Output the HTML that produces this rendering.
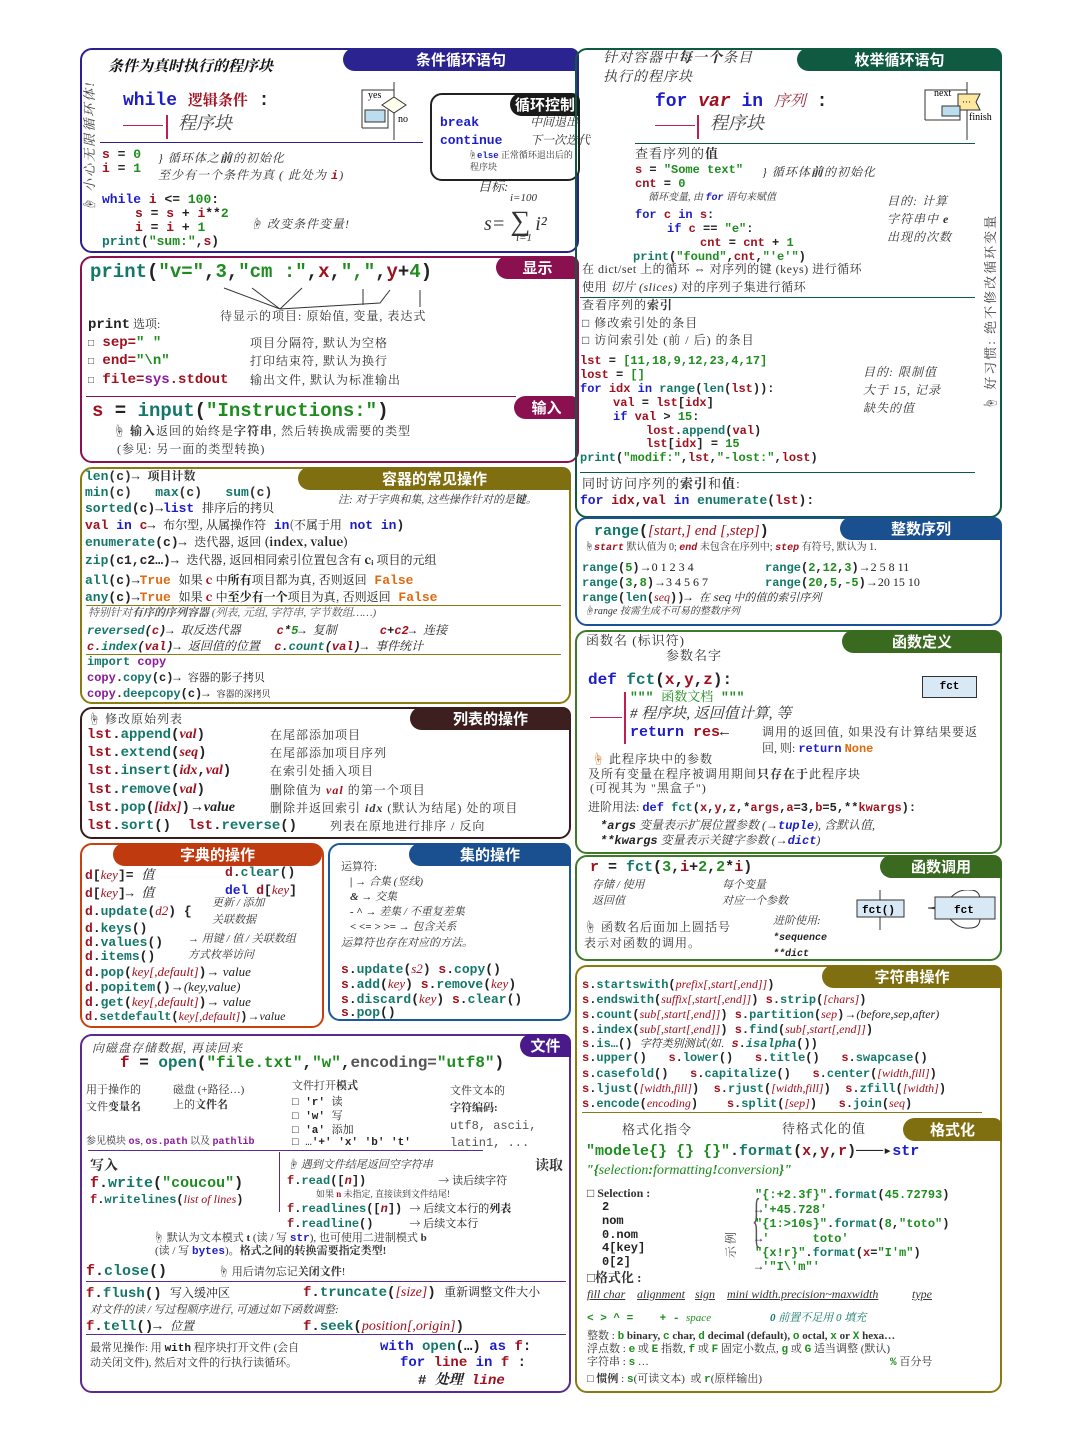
<!DOCTYPE html>
<html><head><meta charset="utf-8">
<style>
body{margin:0;width:1080px;height:1440px;background:#fff;position:relative;overflow:hidden}
.l{position:absolute;white-space:pre;line-height:1;font-family:"Liberation Serif","Noto Serif CJK SC",serif;font-size:12px;color:#333}
.c{font-family:"Liberation Mono","Noto Sans CJK SC",monospace;font-weight:bold;color:#222}
.k{color:#1c1cc8}.f{color:#13776a}.v{color:#a0101e}.g{color:#1e8c1e}.p{color:#8c1a9a}.o{color:#e06a10}
.i{font-style:italic}.bd{font-weight:bold}
.b{position:absolute;border:2px solid;border-radius:12px;box-sizing:border-box}
.t{position:absolute;color:#fff;font:bold 15px "Noto Sans CJK SC",sans-serif;border-radius:14px 10px 0 14px;text-align:center;line-height:23px;height:23px}
.hr{position:absolute;height:2px}
.rt{position:absolute;white-space:nowrap;transform:rotate(-90deg);transform-origin:left top;font-family:"Liberation Serif","Noto Serif CJK SC",serif;font-style:italic;font-size:13px;line-height:15px;color:#444;letter-spacing:2px}
</style></head><body>

<!-- BOX 1 条件循环 -->
<div class="b" style="left:80px;top:48px;width:499px;height:205px;border-color:#2b2090"></div>
<div class="t" style="left:343px;top:48px;width:236px;background:#2b2490">条件循环语句</div>
<div class="l i bd" style="left:108px;top:60px;font-size:15px;color:#111">条件为真时执行的程序块</div>
<div class="l c" style="left:123px;top:92px;font-size:18px"><span class="k">while</span> <span class="v" style="font-family:'Noto Serif CJK SC';font-size:15px">逻辑条件</span> :</div>
<div class="hr" style="left:123px;top:125px;width:40px;height:1px;background:#c02050"></div>
<div style="position:absolute;left:166px;top:115px;width:2px;height:24px;background:#c02050"></div>
<div class="l i" style="left:178px;top:114px;font-size:18px;color:#444">程序块</div>
<div class="hr" style="left:100px;top:142px;width:323px;height:1px;background:#2b2090"></div>
<div class="l c" style="left:102px;top:148px;font-size:13px"><span class="v">s</span> = <span class="g">0</span></div>
<div class="l c" style="left:102px;top:162px;font-size:13px"><span class="v">i</span> = <span class="g">1</span></div>
<div class="l i" style="left:158px;top:152px;font-size:12px;letter-spacing:1px">} 循环体之<b>前</b>的初始化</div>
<div class="l i" style="left:158px;top:169px;font-size:12px;letter-spacing:1px">至少有一个条件为真 ( 此处为 <span class="c v">i</span>)</div>
<div class="l c" style="left:102px;top:193px;font-size:13px"><span class="k">while</span> <span class="v">i</span> &lt;= <span class="g">100</span>:</div>
<div class="l c" style="left:135px;top:207px;font-size:13px"><span class="v">s</span> = <span class="v">s</span> + <span class="v">i</span>**<span class="g">2</span></div>
<div class="l c" style="left:135px;top:221px;font-size:13px"><span class="v">i</span> = <span class="v">i</span> + <span class="g">1</span></div>
<div class="l c" style="left:102px;top:235px;font-size:13px"><span class="f">print</span>(<span class="g">"sum:"</span>,<span class="v">s</span>)</div>
<div class="l i" style="left:250px;top:218px;letter-spacing:1px">☝ 改变条件变量!</div>
<div class="rt" style="left:82px;top:212px">☝ 小心无限循环体!</div>
<svg style="position:absolute;left:360px;top:80px" width="55" height="60"><path d="M34 2V80" stroke="#333" fill="none"/><path d="M34 55V70" stroke="#333"/><polygon points="34,17 46,25 34,33 22,25" fill="#ffe" stroke="#333"/><rect x="5" y="30" width="20" height="12" fill="#bde" stroke="#333"/><path d="M2 48H28V30 M2 48V10H34" stroke="#333" fill="none"/><text x="8" y="18" font-size="10" font-family="Liberation Serif">yes</text><text x="38" y="42" font-size="10" font-family="Liberation Serif">no</text></svg>
<div class="l i" style="left:478px;top:180px;font-size:13px">目标:</div>
<div class="l i" style="left:510px;top:193px;font-size:11px">i=100</div>
<div class="l i" style="left:484px;top:208px;font-size:20px">s= <span style="font-size:28px;font-style:normal">∑</span> i²</div>
<div class="l i" style="left:516px;top:233px;font-size:11px">i=1</div>

<!-- 循环控制 -->
<div class="b" style="left:430px;top:93px;width:150px;height:88px;border-color:#222;background:#fff"></div>
<div class="t" style="left:510px;top:93px;width:70px;background:#1a1a1a">循环控制</div>
<div class="l c k" style="left:440px;top:116px;font-size:13px">break</div>
<div class="l i" style="left:530px;top:116px">中间退出</div>
<div class="l c k" style="left:440px;top:134px;font-size:13px">continue</div>
<div class="l i" style="left:530px;top:134px">下一次迭代</div>
<div class="l" style="left:468px;top:151px;font-size:9px">☝<span class="c k">else</span> 正常循环退出后的</div>
<div class="l" style="left:470px;top:163px;font-size:9px">程序块</div>

<!-- 显示 -->
<div class="b" style="left:80px;top:256px;width:499px;height:207px;border-color:#8a1050"></div>
<div class="t" style="left:496px;top:256px;width:83px;background:#8a1050">显示</div>
<div class="l c" style="left:90px;top:263px;font-size:19px"><span class="f">print</span>(<span class="g">"v="</span>,<span class="g">3</span>,<span class="g">"cm :"</span>,<span class="v">x</span>,<span class="g">","</span>,<span class="v">y</span>+<span class="g">4</span>)</div>
<svg style="position:absolute;left:180px;top:285px" width="260" height="30"><g stroke="#333" fill="none"><path d="M100 24L44 3M100 24L72 3M100 24L122 3M100 24L200 18L210 5M183 20V4M240 22V5"/></g></svg>
<div class="l" style="left:220px;top:310px;font-size:12px;letter-spacing:1px">待显示的项目: 原始值, 变量, 表达式</div>
<div class="l" style="left:88px;top:318px;font-size:12px"><span class="c" style="font-size:14px">print</span> 选项:</div>
<div class="l c v" style="left:88px;top:336px;font-size:14px"><span style="color:#333;font-size:10px">□</span> sep=<span class="g">" "</span></div>
<div class="l c v" style="left:88px;top:354px;font-size:14px"><span style="color:#333;font-size:10px">□</span> end=<span class="g">"\n"</span></div>
<div class="l c v" style="left:88px;top:373px;font-size:14px"><span style="color:#333;font-size:10px">□</span> file=<span class="p">sys</span>.stdout</div>
<div class="l" style="left:250px;top:337px;letter-spacing:1px">项目分隔符, 默认为空格</div>
<div class="l" style="left:250px;top:355px;letter-spacing:1px">打印结束符, 默认为换行</div>
<div class="l" style="left:250px;top:374px;letter-spacing:1px">输出文件, 默认为标准输出</div>
<div class="hr" style="left:86px;top:396px;width:430px;height:1px;background:#8a1050"></div>
<div class="t" style="left:514px;top:396px;width:65px;background:#8a1050">输入</div>
<div class="l c" style="left:92px;top:402px;font-size:19px"><span class="v">s</span> = <span class="f">input</span>(<span class="g">"Instructions:"</span>)</div>
<div class="l" style="left:113px;top:425px;letter-spacing:1px">☝ <b>输入</b>返回的始终是<b>字符串</b>, 然后转换成需要的类型</div>
<div class="l" style="left:117px;top:443px;letter-spacing:1px">(参见: 另一面的类型转换)</div>

<!-- 容器 -->
<div class="b" style="left:80px;top:467px;width:491px;height:237px;border-color:#8a7a10"></div>
<div class="t" style="left:298px;top:467px;width:273px;background:#7f6f10">容器的常见操作</div>
<div class="l c f" style="left:85px;top:470px;font-size:13px">len<span style="color:#333">(c)→</span> <span class="l" style="position:static;font-size:12px">项目计数</span></div>
<div class="l c f" style="left:85px;top:486px;font-size:13px">min<span style="color:#333">(c)</span>   max<span style="color:#333">(c)</span>   sum<span style="color:#333">(c)</span></div>
<div class="l i" style="left:338px;top:495px;font-size:11px">注: 对于字典和集, 这些操作针对的是<b>键</b>。</div>
<div class="l c" style="left:85px;top:502px;font-size:13px"><span class="f">sorted</span>(c)→<span class="k">list</span> <span style="font-family:'Noto Serif CJK SC';font-weight:normal;font-size:12px">排序后的拷贝</span></div>
<div class="l c" style="left:85px;top:519px;font-size:13px"><span class="v">val</span> <span class="k">in</span> <span class="v">c</span>→ <span style="font-family:'Noto Serif CJK SC';font-weight:normal;font-size:12px">布尔型, 从属操作符</span> <span class="k">in</span><span style="font-family:'Noto Serif CJK SC';font-weight:normal;font-size:12px">(不属于用</span> <span class="k">not in</span>)</div>
<div class="l c" style="left:85px;top:536px;font-size:13px"><span class="f">enumerate</span>(c)→ <span style="font-family:'Noto Serif CJK SC';font-weight:normal;font-size:12px">迭代器, 返回 <b>(index, value)</b></span></div>
<div class="l c" style="left:85px;top:554px;font-size:13px"><span class="f">zip</span>(c1,c2…)→ <span style="font-family:'Noto Serif CJK SC';font-weight:normal;font-size:12px">迭代器, 返回相同索引位置包含有 <b>cᵢ</b> 项目的元组</span></div>
<div class="l c" style="left:85px;top:574px;font-size:13px"><span class="f">all</span>(c)→<span class="o">True</span> <span style="font-family:'Noto Serif CJK SC';font-weight:normal;font-size:12px">如果 <b class="v">c</b> 中<b>所有</b>项目都为真, 否则返回</span> <span class="o">False</span></div>
<div class="l c" style="left:85px;top:591px;font-size:13px"><span class="f">any</span>(c)→<span class="o">True</span> <span style="font-family:'Noto Serif CJK SC';font-weight:normal;font-size:12px">如果 <b class="v">c</b> 中<b>至少有一个</b>项目为真, 否则返回</span> <span class="o">False</span></div>
<div class="hr" style="left:86px;top:605px;width:475px;height:1px;background:#8a7a10"></div>
<div class="l i" style="left:88px;top:608px;font-size:11px;color:#555">特别针对<b>有序的序列容器</b> (列表, 元组, 字符串, 字节数组……)</div>
<div class="l c i" style="left:87px;top:624px;font-size:12px"><span class="f">reversed</span>(<span class="v">c</span>)→ <span style="font-family:'Noto Serif CJK SC';font-weight:normal">取反迭代器</span>     <span class="v">c</span>*<span class="g">5</span>→ <span style="font-family:'Noto Serif CJK SC';font-weight:normal">复制</span>      <span class="v">c</span>+<span class="v">c2</span>→ <span style="font-family:'Noto Serif CJK SC';font-weight:normal">连接</span></div>
<div class="l c i" style="left:87px;top:640px;font-size:12px"><span class="v">c</span>.<span class="f">index</span>(<span class="v">val</span>)→ <span style="font-family:'Noto Serif CJK SC';font-weight:normal">返回值的位置</span>  <span class="v">c</span>.<span class="f">count</span>(<span class="v">val</span>)→ <span style="font-family:'Noto Serif CJK SC';font-weight:normal">事件统计</span></div>
<div class="hr" style="left:86px;top:654px;width:475px;height:1px;background:#8a7a10"></div>
<div class="l c" style="left:87px;top:656px;font-size:12px"><span class="f">import</span> <span class="p">copy</span></div>
<div class="l c" style="left:87px;top:672px;font-size:12px"><span class="p">copy</span>.<span class="f">copy</span>(c)→ <span style="font-family:'Noto Serif CJK SC';font-weight:normal;font-size:11px">容器的影子拷贝</span></div>
<div class="l c" style="left:87px;top:688px;font-size:12px"><span class="p">copy</span>.<span class="f">deepcopy</span>(c)→ <span style="font-family:'Noto Serif CJK SC';font-weight:normal;font-size:9px">容器的深拷贝</span></div>

<!-- 列表 -->
<div class="b" style="left:80px;top:707px;width:491px;height:132px;border-color:#3a1a1a"></div>
<div class="t" style="left:410px;top:707px;width:161px;background:#3d1f1f">列表的操作</div>
<div class="l" style="left:88px;top:713px;letter-spacing:1px">☝ 修改原始列表</div>
<div class="l c" style="left:87px;top:728px;font-size:14px"><span class="v">lst</span>.<span class="f">append</span>(<span class="v i" style="font-family:'Liberation Serif'">val</span>)</div>
<div class="l c" style="left:87px;top:746px;font-size:14px"><span class="v">lst</span>.<span class="f">extend</span>(<span class="v i" style="font-family:'Liberation Serif'">seq</span>)</div>
<div class="l c" style="left:87px;top:764px;font-size:14px"><span class="v">lst</span>.<span class="f">insert</span>(<span class="v i" style="font-family:'Liberation Serif'">idx</span>,<span class="v i" style="font-family:'Liberation Serif'">val</span>)</div>
<div class="l c" style="left:87px;top:783px;font-size:14px"><span class="v">lst</span>.<span class="f">remove</span>(<span class="v i" style="font-family:'Liberation Serif'">val</span>)</div>
<div class="l c" style="left:87px;top:801px;font-size:14px"><span class="v">lst</span>.<span class="f">pop</span>(<span class="v i" style="font-family:'Liberation Serif'">[idx]</span>)<span class="i" style="font-family:'Liberation Serif'">→value</span></div>
<div class="l c" style="left:87px;top:819px;font-size:14px"><span class="v">lst</span>.<span class="f">sort</span>()  <span class="v">lst</span>.<span class="f">reverse</span>()</div>
<div class="l" style="left:270px;top:729px;letter-spacing:1px">在尾部添加项目</div>
<div class="l" style="left:270px;top:747px;letter-spacing:1px">在尾部添加项目序列</div>
<div class="l" style="left:270px;top:765px;letter-spacing:1px">在索引处插入项目</div>
<div class="l" style="left:270px;top:784px;letter-spacing:1px">删除值为 <b class="i v">val</b> 的第一个项目</div>
<div class="l" style="left:270px;top:802px;letter-spacing:1px">删除并返回索引 <b class="i">idx</b> (默认为结尾) 处的项目</div>
<div class="l" style="left:330px;top:820px;letter-spacing:1px">列表在原地进行排序 / 反向</div>

<!-- 字典 -->
<div class="b" style="left:80px;top:843px;width:244px;height:185px;border-color:#c84010"></div>
<div class="t" style="left:113px;top:843px;width:209px;background:#c03a10;border-radius:14px 14px 14px 14px">字典的操作</div>
<div class="l c" style="left:85px;top:867px;font-size:13px"><span class="v">d</span>[<span class="v i" style="font-family:'Liberation Serif';font-weight:normal">key</span>]= <span class="i" style="font-family:'Noto Serif CJK SC';font-weight:normal">值</span></div>
<div class="l c" style="left:85px;top:885px;font-size:13px"><span class="v">d</span>[<span class="v i" style="font-family:'Liberation Serif';font-weight:normal">key</span>]→ <span class="i" style="font-family:'Noto Serif CJK SC';font-weight:normal">值</span></div>
<div class="l c" style="left:225px;top:866px;font-size:13px"><span class="v">d</span>.<span class="f">clear</span>()</div>
<div class="l c" style="left:225px;top:883px;font-size:13px"><span class="k">del</span> <span class="v">d</span>[<span class="v i" style="font-family:'Liberation Serif';font-weight:normal">key</span>]</div>
<div class="l c" style="left:85px;top:904px;font-size:13px"><span class="v">d</span>.<span class="f">update</span>(<span class="v i" style="font-family:'Liberation Serif';font-weight:normal">d2</span>) {</div>
<div class="l i" style="left:212px;top:898px;font-size:11px">更新 / 添加</div>
<div class="l i" style="left:212px;top:915px;font-size:11px">关联数据</div>
<div class="l c" style="left:85px;top:922px;font-size:13px"><span class="v">d</span>.<span class="f">keys</span>()</div>
<div class="l c" style="left:85px;top:936px;font-size:13px"><span class="v">d</span>.<span class="f">values</span>()</div>
<div class="l c" style="left:85px;top:950px;font-size:13px"><span class="v">d</span>.<span class="f">items</span>()</div>
<div class="l i" style="left:188px;top:934px;font-size:11px">→ 用键 / 值 / 关联数组</div>
<div class="l i" style="left:188px;top:950px;font-size:11px">方式枚举访问</div>
<div class="l c" style="left:85px;top:965px;font-size:13px"><span class="v">d</span>.<span class="f">pop</span>(<span class="v i" style="font-family:'Liberation Serif';font-weight:normal">key[,default]</span>)<span class="i" style="font-family:'Liberation Serif';font-weight:normal">→ value</span></div>
<div class="l c" style="left:85px;top:980px;font-size:13px"><span class="v">d</span>.<span class="f">popitem</span>()<span class="i" style="font-family:'Liberation Serif';font-weight:normal">→(key,value)</span></div>
<div class="l c" style="left:85px;top:995px;font-size:13px"><span class="v">d</span>.<span class="f">get</span>(<span class="v i" style="font-family:'Liberation Serif';font-weight:normal">key[,default]</span>)<span class="i" style="font-family:'Liberation Serif';font-weight:normal">→ value</span></div>
<div class="l c" style="left:85px;top:1010px;font-size:12px"><span class="v">d</span>.<span class="f">setdefault</span>(<span class="v i" style="font-family:'Liberation Serif';font-weight:normal">key[,default]</span>)<span class="i" style="font-family:'Liberation Serif';font-weight:normal">→value</span></div>

<!-- 集 -->
<div class="b" style="left:328px;top:843px;width:243px;height:178px;border-color:#1a5a9a"></div>
<div class="t" style="left:409px;top:843px;width:162px;background:#1a4f90">集的操作</div>
<div class="l" style="left:341px;top:862px;font-size:11px">运算符:</div>
<div class="l i" style="left:350px;top:877px;font-size:11px"><b>|</b> → 合集 (竖线)</div>
<div class="l i" style="left:350px;top:892px;font-size:11px"><b>&amp;</b> → 交集</div>
<div class="l i" style="left:350px;top:907px;font-size:11px"><b>- ^</b> → 差集 / 不重复差集</div>
<div class="l i" style="left:350px;top:922px;font-size:11px"><b>&lt; &lt;= &gt; &gt;=</b> → 包含关系</div>
<div class="l i" style="left:341px;top:938px;font-size:11px">运算符也存在对应的方法。</div>
<div class="l c" style="left:341px;top:962px;font-size:13px"><span class="v">s</span>.<span class="f">update</span>(<span class="v i" style="font-family:'Liberation Serif';font-weight:normal">s2</span>) <span class="v">s</span>.<span class="f">copy</span>()</div>
<div class="l c" style="left:341px;top:977px;font-size:13px"><span class="v">s</span>.<span class="f">add</span>(<span class="v i" style="font-family:'Liberation Serif';font-weight:normal">key</span>) <span class="v">s</span>.<span class="f">remove</span>(<span class="v i" style="font-family:'Liberation Serif';font-weight:normal">key</span>)</div>
<div class="l c" style="left:341px;top:992px;font-size:13px"><span class="v">s</span>.<span class="f">discard</span>(<span class="v i" style="font-family:'Liberation Serif';font-weight:normal">key</span>) <span class="v">s</span>.<span class="f">clear</span>()</div>
<div class="l c" style="left:341px;top:1006px;font-size:13px"><span class="v">s</span>.<span class="f">pop</span>()</div>

<!-- 文件 -->
<div class="b" style="left:80px;top:1034px;width:491px;height:359px;border-color:#5a2a90"></div>
<div class="t" style="left:520px;top:1034px;width:51px;background:#4a1a8a">文件</div>
<div class="l i" style="left:92px;top:1042px;font-size:12px;letter-spacing:1px">向磁盘存储数据, 再读回来</div>
<div class="l c" style="left:120px;top:1055px;font-size:16px"><span class="v">f</span> = <span class="f">open</span>(<span class="g">"file.txt"</span>,<span class="g">"w"</span>,<span style="color:#555">encoding=</span><span class="g">"utf8"</span>)</div>
<div class="l" style="left:86px;top:1085px;font-size:11px">用于操作的</div>
<div class="l" style="left:86px;top:1102px;font-size:11px">文件<b>变量名</b></div>
<div class="l" style="left:173px;top:1085px;font-size:11px">磁盘 (+路径…)</div>
<div class="l" style="left:173px;top:1100px;font-size:11px">上的<b>文件名</b></div>
<div class="l" style="left:292px;top:1081px;font-size:11px">文件打开<b>模式</b></div>
<div class="l c" style="left:292px;top:1096px;font-size:11px"><span style="font-weight:normal">□</span> 'r' <span style="font-family:'Noto Serif CJK SC';font-weight:normal">读</span></div>
<div class="l c" style="left:292px;top:1110px;font-size:11px"><span style="font-weight:normal">□</span> 'w' <span style="font-family:'Noto Serif CJK SC';font-weight:normal">写</span></div>
<div class="l c" style="left:292px;top:1124px;font-size:11px"><span style="font-weight:normal">□</span> 'a' <span style="font-family:'Noto Serif CJK SC';font-weight:normal">添加</span></div>
<div class="l c" style="left:292px;top:1138px;font-size:11px"><span style="font-weight:normal">□ …</span>'+' 'x' 'b' 't'</div>
<div class="l" style="left:450px;top:1086px;font-size:11px">文件文本的</div>
<div class="l bd" style="left:450px;top:1103px;font-size:11px">字符编码:</div>
<div class="l c" style="left:450px;top:1120px;font-size:12px;font-weight:normal;color:#555">utf8, ascii,</div>
<div class="l c" style="left:450px;top:1137px;font-size:12px;font-weight:normal;color:#555">latin1, ...</div>
<div class="l" style="left:86px;top:1137px;font-size:10px">参见模块 <span class="c p">os</span>, <span class="c p">os.path</span> 以及 <span class="c p">pathlib</span></div>
<div class="hr" style="left:88px;top:1150px;width:395px;height:1px;background:#5a2a90"></div>
<div style="position:absolute;left:279px;top:1152px;width:1px;height:60px;background:#5a2a90"></div>
<div class="l bd" style="left:90px;top:1160px;font-size:14px">写入</div>
<div class="l c" style="left:90px;top:1176px;font-size:15px"><span class="v">f</span>.<span class="f">write</span>(<span class="g">"coucou"</span>)</div>
<div class="l c" style="left:90px;top:1193px;font-size:12px"><span class="v">f</span>.<span class="f">writelines</span>(<span class="v i" style="font-family:'Liberation Serif';font-weight:normal">list of lines</span>)</div>
<div class="l bd" style="left:535px;top:1160px;font-size:14px">读取</div>
<div class="l i" style="left:287px;top:1160px;font-size:11px">☝ 遇到文件结尾返回空字符串</div>
<div class="l c" style="left:287px;top:1175px;font-size:12px"><span class="v">f</span>.<span class="f">read</span>([<span class="v i">n</span>])          <span style="font-family:'Noto Serif CJK SC';font-weight:normal;font-size:11px">→ 读后续字符</span></div>
<div class="l" style="left:316px;top:1190px;font-size:9px">如果 <b class="v">n</b> 未指定, 直接读到文件结尾!</div>
<div class="l c" style="left:287px;top:1203px;font-size:12px"><span class="v">f</span>.<span class="f">readlines</span>([<span class="v i">n</span>]) <span style="font-family:'Noto Serif CJK SC';font-weight:normal;font-size:11px">→ 后续文本行的<b>列表</b></span></div>
<div class="l c" style="left:287px;top:1218px;font-size:12px"><span class="v">f</span>.<span class="f">readline</span>()     <span style="font-family:'Noto Serif CJK SC';font-weight:normal;font-size:11px">→ 后续文本行</span></div>
<div class="l" style="left:153px;top:1233px;font-size:11px">☝ 默认为文本模式 <b>t</b> (读 / 写 <span class="c k">str</span>), 也可使用二进制模式 <b>b</b></div>
<div class="l" style="left:155px;top:1246px;font-size:11px">(读 / 写 <span class="c k">bytes</span>)。<b>格式之间的转换需要指定类型!</b></div>
<div class="l c" style="left:86px;top:1264px;font-size:15px"><span class="v">f</span>.<span class="f">close</span>()</div>
<div class="l" style="left:218px;top:1267px;font-size:11px">☝ 用后请勿忘记<b>关闭文件</b>!</div>
<div class="hr" style="left:86px;top:1281px;width:480px;height:1px;background:#5a2a90"></div>
<div class="l c" style="left:86px;top:1287px;font-size:14px"><span class="v">f</span>.<span class="f">flush</span>() <span style="font-family:'Noto Serif CJK SC';font-weight:normal;font-size:12px">写入缓冲区</span></div>
<div class="l c" style="left:303px;top:1286px;font-size:14px"><span class="v">f</span>.<span class="f">truncate</span>(<span class="v i" style="font-family:'Liberation Serif';font-weight:normal">[size]</span>) <span style="font-family:'Noto Serif CJK SC';font-weight:normal;font-size:12px">重新调整文件大小</span></div>
<div class="l i" style="left:90px;top:1305px;font-size:11px">对文件的读 / 写过程顺序进行, 可通过如下函数调整:</div>
<div class="l c" style="left:86px;top:1320px;font-size:14px"><span class="v">f</span>.<span class="f">tell</span>()→ <span class="i" style="font-family:'Noto Serif CJK SC';font-weight:normal;font-size:12px">位置</span></div>
<div class="l c" style="left:303px;top:1320px;font-size:14px"><span class="v">f</span>.<span class="f">seek</span>(<span class="v i" style="font-family:'Liberation Serif';font-weight:normal">position[,origin]</span>)</div>
<div class="hr" style="left:86px;top:1334px;width:480px;height:1px;background:#5a2a90"></div>
<div class="l" style="left:90px;top:1343px;font-size:11px">最常见操作: 用 <b class="c">with</b> 程序块打开文件 (会自</div>
<div class="l" style="left:90px;top:1358px;font-size:11px">动关闭文件), 然后对文件的行执行读循环。</div>
<div class="l c" style="left:380px;top:1340px;font-size:14px"><span class="k">with</span> <span class="f">open</span>(…) <span class="k">as</span> <span class="v">f</span>:</div>
<div class="l c" style="left:400px;top:1356px;font-size:14px"><span class="k">for</span> <span class="v">line</span> <span class="k">in</span> <span class="v">f</span> :</div>
<div class="l c" style="left:418px;top:1372px;font-size:14px"># <span class="i" style="font-family:'Noto Serif CJK SC'">处理</span> <span class="v i">line</span></div>

<!-- 枚举 -->
<div class="b" style="left:575px;top:48px;width:427px;height:470px;border-color:#0f5a3e"></div>
<div class="t" style="left:797px;top:48px;width:205px;background:#0f5a40">枚举循环语句</div>
<div class="l i" style="left:603px;top:52px;font-size:14px;letter-spacing:1px">针对容器中<b>每一个</b>条目</div>
<div class="l i" style="left:603px;top:71px;font-size:14px;letter-spacing:1px">执行的程序块</div>
<div class="l c" style="left:655px;top:92px;font-size:18px"><span class="k">for</span> <span class="v i">var</span> <span class="k">in</span> <span class="i" style="font-family:'Noto Serif CJK SC';font-weight:normal;color:#a03040;font-size:16px">序列</span> :</div>
<div class="hr" style="left:655px;top:125px;width:40px;height:1px;background:#c02050"></div>
<div style="position:absolute;left:697px;top:115px;width:2px;height:24px;background:#c02050"></div>
<div class="l i" style="left:710px;top:114px;font-size:18px;color:#444">程序块</div>
<svg style="position:absolute;left:920px;top:80px" width="80" height="60"><g stroke="#333" fill="none"><path d="M47 2V80M5 40V10H47M5 40H40V24"/></g><path d="M38 14H60L56 22L60 30H38Z" fill="#ffe7a0" stroke="#333"/><text x="42" y="25" font-size="9">···</text><rect x="22" y="26" width="18" height="10" fill="#bde" stroke="#333"/><text x="14" y="16" font-size="10" font-family="Liberation Serif">next</text><text x="49" y="40" font-size="10" font-family="Liberation Serif">finish</text></svg>
<div class="hr" style="left:635px;top:143px;width:340px;height:1px;background:#0f5a3e"></div>
<div class="l" style="left:635px;top:147px;font-size:13px;letter-spacing:1px">查看序列的<b>值</b></div>
<div class="l c" style="left:635px;top:164px;font-size:12px"><span class="v">s</span> = <span class="g">"Some text"</span></div>
<div class="l c" style="left:635px;top:178px;font-size:12px"><span class="v">cnt</span> = <span class="g">0</span></div>
<div class="l i" style="left:762px;top:166px;font-size:12px;letter-spacing:1px">} 循环体<b>前</b>的初始化</div>
<div class="l i" style="left:648px;top:193px;font-size:10px">循环变量, 由 <span class="c k">for</span> 语句来赋值</div>
<div class="l c" style="left:635px;top:209px;font-size:12px"><span class="k">for</span> <span class="v">c</span> <span class="k">in</span> <span class="v">s</span>:</div>
<div class="l c" style="left:667px;top:223px;font-size:12px"><span class="k">if</span> <span class="v">c</span> == <span class="g">"e"</span>:</div>
<div class="l c" style="left:700px;top:237px;font-size:12px"><span class="v">cnt</span> = <span class="v">cnt</span> + <span class="g">1</span></div>
<div class="l c" style="left:633px;top:251px;font-size:12px"><span class="f">print</span>(<span class="g">"found"</span>,<span class="v">cnt</span>,<span class="g">"'e'"</span>)</div>
<div class="l i" style="left:887px;top:195px;font-size:12px;letter-spacing:1px">目的: 计算</div>
<div class="l i" style="left:887px;top:213px;font-size:12px;letter-spacing:1px">字符串中 <b>e</b></div>
<div class="l i" style="left:887px;top:231px;font-size:12px;letter-spacing:1px">出现的次数</div>
<div class="l" style="left:582px;top:263px;letter-spacing:0.5px">在 dict/set 上的循环 ⇔ 对序列的键 (keys) 进行循环</div>
<div class="l" style="left:582px;top:281px;letter-spacing:0.5px">使用 <i>切片 (slices)</i> 对的序列子集进行循环</div>
<div class="hr" style="left:580px;top:297px;width:395px;height:1px;background:#0f5a3e"></div>
<div class="l" style="left:582px;top:299px;letter-spacing:1px">查看序列的<b>索引</b></div>
<div class="l" style="left:582px;top:317px;letter-spacing:1px">□ 修改索引处的条目</div>
<div class="l" style="left:582px;top:334px;letter-spacing:1px">□ 访问索引处 (前 / 后) 的条目</div>
<div class="l c" style="left:580px;top:355px;font-size:12px"><span class="v">lst</span> = <span class="g">[11,18,9,12,23,4,17]</span></div>
<div class="l c" style="left:580px;top:369px;font-size:12px"><span class="v">lost</span> = <span class="g">[]</span></div>
<div class="l c" style="left:580px;top:383px;font-size:12px"><span class="k">for</span> <span class="v">idx</span> <span class="k">in</span> <span class="f">range</span>(<span class="f">len</span>(<span class="v">lst</span>)):</div>
<div class="l c" style="left:613px;top:397px;font-size:12px"><span class="v">val</span> = <span class="v">lst</span>[<span class="v">idx</span>]</div>
<div class="l c" style="left:613px;top:411px;font-size:12px"><span class="k">if</span> <span class="v">val</span> &gt; <span class="g">15</span>:</div>
<div class="l c" style="left:646px;top:425px;font-size:12px"><span class="v">lost</span>.<span class="f">append</span>(<span class="v">val</span>)</div>
<div class="l c" style="left:646px;top:438px;font-size:12px"><span class="v">lst</span>[<span class="v">idx</span>] = <span class="g">15</span></div>
<div class="l c" style="left:580px;top:452px;font-size:12px"><span class="f">print</span>(<span class="g">"modif:"</span>,<span class="v">lst</span>,<span class="g">"-lost:"</span>,<span class="v">lost</span>)</div>
<div class="l i" style="left:863px;top:366px;font-size:12px;letter-spacing:1px">目的: 限制值</div>
<div class="l i" style="left:863px;top:384px;font-size:12px;letter-spacing:1px">大于 15, 记录</div>
<div class="l i" style="left:863px;top:402px;font-size:12px;letter-spacing:1px">缺失的值</div>
<div class="rt" style="left:983px;top:410px;font-style:normal">☝ 好习惯: 绝不修改循环变量</div>
<div class="hr" style="left:580px;top:472px;width:395px;height:1px;background:#0f5a3e"></div>
<div class="l" style="left:582px;top:477px;font-size:13px;letter-spacing:1px">同时访问序列的<b>索引</b>和<b>值</b>:</div>
<div class="l c" style="left:580px;top:494px;font-size:13px"><span class="k">for</span> <span class="v">idx</span>,<span class="v">val</span> <span class="k">in</span> <span class="f">enumerate</span>(<span class="v">lst</span>):</div>

<!-- 整数序列 -->
<div class="b" style="left:575px;top:517px;width:427px;height:109px;border-color:#1a4f9a"></div>
<div class="t" style="left:840px;top:517px;width:162px;background:#1a4f90">整数序列</div>
<div class="l c" style="left:594px;top:524px;font-size:15px"><span class="f">range</span>(<span class="v i" style="font-family:'Liberation Serif';font-weight:normal">[start,] end [,step]</span>)</div>
<div class="l" style="left:584px;top:543px;font-size:10px">☝<span class="c v i">start</span> 默认值为 0; <span class="c v i">end</span> 未包含在序列中; <span class="c v i">step</span> 有符号, 默认为 1.</div>
<div class="l c" style="left:582px;top:561px;font-size:12px"><span class="f">range</span>(<span class="g">5</span>)<span style="font-family:'Liberation Serif';font-weight:normal">→0 1 2 3 4</span></div>
<div class="l c" style="left:582px;top:576px;font-size:12px"><span class="f">range</span>(<span class="g">3</span>,<span class="g">8</span>)<span style="font-family:'Liberation Serif';font-weight:normal">→3 4 5 6 7</span></div>
<div class="l c" style="left:582px;top:591px;font-size:12px"><span class="f">range</span>(<span class="f">len</span>(<span class="v i" style="font-family:'Liberation Serif';font-weight:normal">seq</span>))→ <span class="i" style="font-family:'Noto Serif CJK SC';font-weight:normal;font-size:11px">在 seq 中的值的索引序列</span></div>
<div class="l c" style="left:765px;top:561px;font-size:12px"><span class="f">range</span>(<span class="g">2</span>,<span class="g">12</span>,<span class="g">3</span>)<span style="font-family:'Liberation Serif';font-weight:normal">→2 5 8 11</span></div>
<div class="l c" style="left:765px;top:576px;font-size:12px"><span class="f">range</span>(<span class="g">20</span>,<span class="g">5</span>,<span class="g">-5</span>)<span style="font-family:'Liberation Serif';font-weight:normal">→20 15 10</span></div>
<div class="l i" style="left:584px;top:607px;font-size:10px">☝range 按需生成不可易的整数序列</div>

<!-- 函数定义 -->
<div class="b" style="left:575px;top:630px;width:427px;height:224px;border-color:#3f7a2a"></div>
<div class="t" style="left:842px;top:630px;width:160px;background:#3a6a20">函数定义</div>
<div class="l" style="left:586px;top:634px;font-size:13px;letter-spacing:1px">函数名 (标识符)</div>
<div class="l" style="left:666px;top:649px;font-size:13px;letter-spacing:1px">参数名字</div>
<div class="l c" style="left:588px;top:672px;font-size:16px"><span class="k">def</span> <span class="f">fct</span>(<span class="v">x</span>,<span class="v">y</span>,<span class="v">z</span>):</div>
<div class="l c g" style="left:630px;top:689px;font-size:13px">""" <span style="font-family:'Noto Serif CJK SC';font-weight:normal">函数文档</span> """</div>
<div class="l i" style="left:630px;top:707px;font-size:15px"># 程序块, 返回值计算, 等</div>
<div class="l c" style="left:630px;top:725px;font-size:15px"><span class="k">return</span> <span class="v">res</span>←</div>
<div style="position:absolute;left:624px;top:692px;width:2px;height:52px;background:#c02050"></div>
<div class="hr" style="left:590px;top:717px;width:32px;height:1px;background:#c02050"></div>
<div class="l" style="left:762px;top:726px;font-size:12px;letter-spacing:1px">调用的返回值, 如果没有计算结果要返</div>
<div class="l" style="left:762px;top:742px;font-size:12px">回, 则: <span class="c k">return</span> <span class="c o">None</span></div>
<div style="position:absolute;left:922px;top:676px;width:55px;height:22px;border:1.5px solid #333;background:#d8e8f4;box-sizing:border-box;font:bold 11px 'Liberation Mono';text-align:center;line-height:20px">fct</div>
<div class="l" style="left:592px;top:753px;font-size:12px;letter-spacing:1px"><span style="color:#d06010">☝</span> 此程序块中的参数</div>
<div class="l" style="left:588px;top:768px;font-size:12px;letter-spacing:1px">及所有变量在程序被调用期间<b>只存在于</b>此程序块</div>
<div class="l" style="left:590px;top:782px;font-size:12px;letter-spacing:1px">(可视其为 "黑盒子")</div>
<div class="l" style="left:588px;top:801px;font-size:12px">进阶用法: <span class="c" style="font-size:12px"><span class="k">def</span> <span class="f">fct</span>(<span class="v">x</span>,<span class="v">y</span>,<span class="v">z</span>,*<span class="v">args</span>,<span class="v">a</span>=3,<span class="v">b</span>=5,**<span class="v">kwargs</span>):</span></div>
<div class="l i" style="left:600px;top:819px;font-size:12px"><span class="c">*args</span> 变量表示扩展位置参数 (→<span class="c k">tuple</span>), 含默认值,</div>
<div class="l i" style="left:600px;top:834px;font-size:12px"><span class="c">**kwargs</span> 变量表示关键字参数 (→<span class="c k">dict</span>)</div>

<!-- 函数调用 -->
<div class="b" style="left:575px;top:855px;width:427px;height:106px;border-color:#3f7a2a"></div>
<div class="t" style="left:880px;top:855px;width:122px;background:#3a6a20">函数调用</div>
<div class="l c" style="left:590px;top:860px;font-size:15px"><span class="v">r</span> = <span class="f">fct</span>(<span class="g">3</span>,<span class="v">i</span>+<span class="g">2</span>,<span class="g">2</span>*<span class="v">i</span>)</div>
<div class="l i" style="left:592px;top:880px;font-size:11px">存储 / 使用</div>
<div class="l i" style="left:592px;top:896px;font-size:11px">返回值</div>
<div class="l i" style="left:722px;top:880px;font-size:11px">每个变量</div>
<div class="l i" style="left:722px;top:896px;font-size:11px">对应一个参数</div>
<div class="l" style="left:584px;top:921px;font-size:12px;letter-spacing:1px">☝ 函数名后面加上圆括号</div>
<div class="l" style="left:584px;top:937px;font-size:12px;letter-spacing:1px">表示对函数的调用。</div>
<div class="l i" style="left:773px;top:916px;font-size:11px">进阶使用:</div>
<div class="l c i" style="left:773px;top:934px;font-size:10px">*sequence</div>
<div class="l c i" style="left:773px;top:950px;font-size:10px">**dict</div>
<svg style="position:absolute;left:850px;top:890px" width="150" height="50"><g stroke="#333" fill="none"><path d="M30 0V10M30 26V40M78 18C100 18 100 -2 120 0C130 0 130 8 130 10M78 18C100 18 100 40 120 38C130 38 130 30 130 28"/></g><rect x="7" y="10" width="47" height="17" fill="#d8e8f4" stroke="#333"/><text x="12" y="23" font-size="11" font-weight="bold" font-family="Liberation Mono">fct()</text><rect x="85" y="7" width="60" height="22" fill="#d8e8f4" stroke="#333"/><text x="104" y="23" font-size="11" font-weight="bold" font-family="Liberation Mono">fct</text></svg>

<!-- 字符串 -->
<div class="b" style="left:575px;top:965px;width:427px;height:428px;border-color:#8a7a10"></div>
<div class="t" style="left:822px;top:965px;width:180px;background:#7f6f10">字符串操作</div>
<div class="l c" style="left:582px;top:978px;font-size:12px"><span class="v">s</span>.<span class="f">startswith</span>(<span class="v i" style="font-family:'Liberation Serif';font-weight:normal">prefix[,start[,end]]</span>)</div>
<div class="l c" style="left:582px;top:993px;font-size:12px"><span class="v">s</span>.<span class="f">endswith</span>(<span class="v i" style="font-family:'Liberation Serif';font-weight:normal">suffix[,start[,end]]</span>) <span class="v">s</span>.<span class="f">strip</span>(<span class="v i" style="font-family:'Liberation Serif';font-weight:normal">[chars]</span>)</div>
<div class="l c" style="left:582px;top:1008px;font-size:12px"><span class="v">s</span>.<span class="f">count</span>(<span class="v i" style="font-family:'Liberation Serif';font-weight:normal">sub[,start[,end]]</span>) <span class="v">s</span>.<span class="f">partition</span>(<span class="v i" style="font-family:'Liberation Serif';font-weight:normal">sep</span>)<span class="i" style="font-family:'Liberation Serif';font-weight:normal">→(before,sep,after)</span></div>
<div class="l c" style="left:582px;top:1023px;font-size:12px"><span class="v">s</span>.<span class="f">index</span>(<span class="v i" style="font-family:'Liberation Serif';font-weight:normal">sub[,start[,end]]</span>) <span class="v">s</span>.<span class="f">find</span>(<span class="v i" style="font-family:'Liberation Serif';font-weight:normal">sub[,start[,end]]</span>)</div>
<div class="l c" style="left:582px;top:1038px;font-size:12px"><span class="v">s</span>.<span class="f">is…</span>() <span class="i" style="font-family:'Noto Serif CJK SC';font-weight:normal;font-size:11px">字符类别测试(如.</span> <span class="v i">s</span>.<span class="f i">isalpha</span>())</div>
<div class="l c" style="left:582px;top:1052px;font-size:12px"><span class="v">s</span>.<span class="f">upper</span>()   <span class="v">s</span>.<span class="f">lower</span>()   <span class="v">s</span>.<span class="f">title</span>()   <span class="v">s</span>.<span class="f">swapcase</span>()</div>
<div class="l c" style="left:582px;top:1067px;font-size:12px"><span class="v">s</span>.<span class="f">casefold</span>()   <span class="v">s</span>.<span class="f">capitalize</span>()   <span class="v">s</span>.<span class="f">center</span>(<span class="v i" style="font-family:'Liberation Serif';font-weight:normal">[width,fill]</span>)</div>
<div class="l c" style="left:582px;top:1082px;font-size:12px"><span class="v">s</span>.<span class="f">ljust</span>(<span class="v i" style="font-family:'Liberation Serif';font-weight:normal">[width,fill]</span>)  <span class="v">s</span>.<span class="f">rjust</span>(<span class="v i" style="font-family:'Liberation Serif';font-weight:normal">[width,fill]</span>)  <span class="v">s</span>.<span class="f">zfill</span>(<span class="v i" style="font-family:'Liberation Serif';font-weight:normal">[width]</span>)</div>
<div class="l c" style="left:582px;top:1097px;font-size:12px"><span class="v">s</span>.<span class="f">encode</span>(<span class="v i" style="font-family:'Liberation Serif';font-weight:normal">encoding</span>)    <span class="v">s</span>.<span class="f">split</span>(<span class="v i" style="font-family:'Liberation Serif';font-weight:normal">[sep]</span>)   <span class="v">s</span>.<span class="f">join</span>(<span class="v i" style="font-family:'Liberation Serif';font-weight:normal">seq</span>)</div>
<div class="hr" style="left:582px;top:1112px;width:400px;height:1px;background:#8a7a10"></div>
<div class="t" style="left:903px;top:1118px;width:99px;background:#7f6f10">格式化</div>
<div class="l" style="left:622px;top:1123px;font-size:13px;letter-spacing:1px">格式化指令</div>
<div class="l" style="left:782px;top:1122px;font-size:13px;letter-spacing:1px">待格式化的值</div>
<div class="l c" style="left:586px;top:1144px;font-size:15px"><span class="g">"modele{} {} {}"</span>.<span class="f">format</span>(<span class="v">x</span>,<span class="v">y</span>,<span class="v">r</span>)───▸<span class="k">str</span></div>
<div class="l i g" style="left:586px;top:1164px;font-size:14px"><b>"{</b>selection<b>:</b>formatting<b>!</b>conversion<b>}"</b></div>
<div class="l bd" style="left:587px;top:1187px;font-size:12px">□ Selection :</div>
<div class="l c" style="left:602px;top:1201px;font-size:12px">2</div>
<div class="l c" style="left:602px;top:1215px;font-size:12px">nom</div>
<div class="l c" style="left:602px;top:1229px;font-size:12px">0.nom</div>
<div class="l c" style="left:602px;top:1242px;font-size:12px">4[key]</div>
<div class="l c" style="left:602px;top:1256px;font-size:12px">0[2]</div>
<div class="rt" style="left:724px;top:1258px;font-style:normal;font-size:12px">示例</div>
<div class="l" style="left:742px;top:1190px;font-size:60px;color:#555;font-weight:100;transform:scaleX(0.3)">{</div>
<div class="l c" style="left:755px;top:1189px;font-size:12px"><span class="g">"{:+2.3f}"</span>.<span class="f">format</span>(<span class="g">45.72793</span>)</div>
<div class="l c g" style="left:755px;top:1204px;font-size:12px"><span style="color:#333">→</span>'+45.728'</div>
<div class="l c" style="left:755px;top:1218px;font-size:12px"><span class="g">"{1:&gt;10s}"</span>.<span class="f">format</span>(<span class="g">8</span>,<span class="g">"toto"</span>)</div>
<div class="l c g" style="left:755px;top:1233px;font-size:12px"><span style="color:#333">→</span>'      toto'</div>
<div class="l c" style="left:755px;top:1247px;font-size:12px"><span class="g">"{x!r}"</span>.<span class="f">format</span>(<span class="v">x</span>=<span class="g">"I'm"</span>)</div>
<div class="l c g" style="left:755px;top:1261px;font-size:12px"><span style="color:#333">→</span>'"I\'m"'</div>
<div class="l bd" style="left:587px;top:1271px;font-size:13px">□格式化 :</div>
<div class="l i" style="left:587px;top:1288px;font-size:12px;text-decoration:underline">fill char</div>
<div class="l i" style="left:637px;top:1288px;font-size:12px;text-decoration:underline">alignment</div>
<div class="l i" style="left:695px;top:1288px;font-size:12px;text-decoration:underline">sign</div>
<div class="l i" style="left:727px;top:1288px;font-size:12px;text-decoration:underline">mini width.precision~maxwidth</div>
<div class="l i" style="left:912px;top:1288px;font-size:12px;text-decoration:underline">type</div>
<div class="l c g" style="left:587px;top:1313px;font-size:11px">&lt; &gt; ^ =    + - <span class="i" style="font-family:'Liberation Serif';font-weight:normal">space</span></div>
<div class="l i" style="left:770px;top:1313px;font-size:11px;color:#13776a"><b>0</b> 前置不足用 0 填充</div>
<div class="l" style="left:587px;top:1331px;font-size:11px">整数 : <span class="c g">b</span> <b>binary,</b> <span class="c g">c</span> <b>char,</b> <span class="c g">d</span> <b>decimal (default),</b> <span class="c g">o</span> <b>octal,</b> <span class="c g">x</span> <b>or</b> <span class="c g">X</span> <b>hexa…</b></div>
<div class="l" style="left:587px;top:1344px;font-size:11px">浮点数 : <span class="c g">e</span> 或 <span class="c g">E</span> 指数, <span class="c g">f</span> 或 <span class="c g">F</span> 固定小数点, <span class="c g">g</span> 或 <span class="c g">G</span> 适当调整 (默认)</div>
<div class="l" style="left:587px;top:1357px;font-size:11px">字符串 : <span class="c g">s</span> …</div>
<div class="l" style="left:890px;top:1357px;font-size:11px"><span class="c g">%</span> 百分号</div>
<div class="l" style="left:587px;top:1374px;font-size:11px">□ <b>惯例</b> : <span class="c g">s</span>(可读文本)  或 <span class="c g">r</span>(原样输出)</div>

</body></html>
